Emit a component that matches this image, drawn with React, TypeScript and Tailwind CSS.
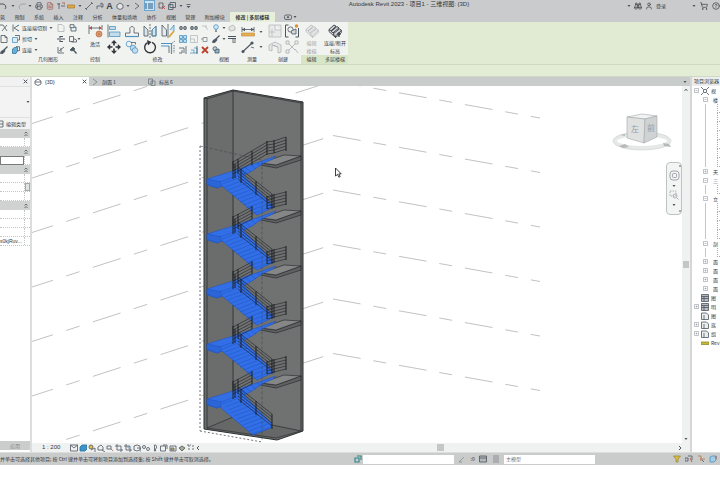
import type { ReactNode } from 'react';
import { Binoculars, ShoppingCart, User, CircleHelp, Printer, FileText } from 'lucide-react';

const INK = '#4b5560';
const BLUE = '#4d94c4';

interface IconProps {
  w?: number;
  h?: number;
  children: ReactNode;
  className?: string;
}

function Icon({ w = 8, h = 8, children, className = '' }: IconProps) {
  return (
    <svg
      width={w}
      height={h}
      viewBox={`0 0 ${w} ${h}`}
      fill="none"
      stroke={INK}
      strokeWidth="0.8"
      className={`shrink-0 ${className}`}
    >
      {children}
    </svg>
  );
}

function Caret() {
  return (
    <Icon w={4} h={4}>
      <path d="M0.5 1h3L2 3z" fill={INK} stroke="none" />
    </Icon>
  );
}

function Tool({ label, children, className = '' }: { label: string; children: ReactNode; className?: string }) {
  return (
    <button type="button" aria-label={label} className={`flex shrink-0 items-center justify-center ${className}`}>
      {children}
    </button>
  );
}

// small 8px glyphs
const join = (
  <Icon>
    <path d="M1 0.5v7M2 4l5-3M2 4l5 3" />
    <path d="M5 1.5h2M5 6.5h2" stroke={BLUE} />
  </Icon>
);
const cut = (
  <Icon>
    <path d="M0.5 2.5h5v5h-5z" fill="#dfe9f0" stroke={BLUE} />
    <path d="M3 0.5h4.5v4.5H5.5" />
  </Icon>
);
const joinSolid = (
  <Icon>
    <path d="M0.5 3l2-1.5h3V5l-1.5 2.5H0.5z" fill="#6aaed6" stroke="#2c77a8" />
    <path d="M4 0.7h3.5v4H5.5" />
  </Icon>
);
const page = (
  <Icon>
    <path d="M1 0.5h4l2 2v5H1zM5 0.5v2h2" />
  </Icon>
);
const pageFaint = (
  <Icon className="opacity-40">
    <path d="M1 0.5h4l2 2v5H1z" />
  </Icon>
);
const cross = (
  <Icon>
    <path d="M0 1h3l4 6M7 1L2 7" />
  </Icon>
);
const brush = (
  <Icon>
    <path d="M7.5 0.5L4 4" strokeWidth="1.2" />
    <path d="M4.4 3.4L1 5.5l-0.5 2h2.5L5 5z" fill={INK} />
  </Icon>
);
const splitFace = (
  <Icon>
    <path d="M0 4h8M3 1v2M3 5v2M3 1.5h3M3 6.5h3" strokeWidth="1.1" />
  </Icon>
);
const paint = (
  <Icon>
    <path d="M1 1v6h6M2 5l5-4M4 2v4" />
  </Icon>
);
const solids = (
  <Icon>
    <path d="M1 0.7h4v3H1zM2 3.5v3.5h5V3H5" />
    <path d="M5 3l1.5 1.5" stroke={BLUE} />
  </Icon>
);
const shapes = (
  <Icon>
    <path d="M0.5 1.5h4v5h-4zM4.5 3.5L7.5 5v2h-5" />
  </Icon>
);
const hammer = (
  <Icon>
    <path d="M1 4L4 1l2 2-3 2z" fill={INK} />
    <path d="M4 3.5l3.5 4" strokeWidth="1.3" />
  </Icon>
);

// large ribbon glyphs
const activate = (
  <Icon w={15} h={14}>
    <path d="M1 1v9M14 1v5M1 4h12" />
    <path d="M1 4l3-2v4zM14 4l-3-2v4z" fill="#b4534a" stroke="none" />
    <circle cx="11" cy="10" r="3" fill="#e5b48c" stroke="#c06f46" />
    <path d="M11 7v6M8 10h6M9 8l4 4M13 8l-4 4" stroke="#c06f46" strokeWidth="0.6" />
  </Icon>
);
const align = (
  <Icon w={14} h={14}>
    <path d="M1 0.5v13" stroke={INK} />
    <path d="M2.5 2.5h6v3h-6zM2.5 8h10.5v4.5H2.5z" fill="#c5dceb" stroke={BLUE} />
  </Icon>
);
const offset = (
  <Icon w={14} h={14}>
    <path d="M0.5 9h4.5V6a2.3 2.3 0 1 1 4 0v3h4.5" />
    <path d="M0.5 12.5h13" stroke={BLUE} strokeWidth="1.2" />
    <path d="M0.5 9v3.5M13.5 9v3.5" />
  </Icon>
);
const mirror = (
  <Icon w={14} h={14}>
    <path d="M1 12V2l4 4v6zM13 12V2L9 6v6z" fill="#d8e4ec" />
    <path d="M9 6v6h4V2z" stroke={BLUE} />
    <path d="M7 0v14" strokeDasharray="2 1" />
  </Icon>
);
const mirrorDraw = (
  <Icon w={14} h={14}>
    <path d="M1 12V1l4.5 5v6z" fill="#e3e9ec" />
    <path d="M9 6l4-5v6" stroke={BLUE} fill="#c5dceb" />
    <path d="M7 0v14" />
    <path d="M8 13l5-6" stroke="#d9a441" strokeWidth="1.8" />
  </Icon>
);
const move = (
  <Icon w={14} h={14}>
    <path d="M7 2v10M2 7h10" strokeWidth="1.6" stroke="#30363b" strokeDasharray="3.5 3" />
    <path d="M7 0l3 3.2H4zM7 14l3-3.2H4zM0 7l3.2-3v6zM14 7l-3.2-3v6z" fill="#30363b" stroke="none" />
  </Icon>
);
const copy = (
  <Icon w={14} h={14}>
    <circle cx="4" cy="4" r="2.8" stroke={BLUE} />
    <path d="M6 2.5h4.5v2" />
    <circle cx="8" cy="8" r="2.8" fill="#c5dceb" stroke={BLUE} />
    <circle cx="10" cy="10.5" r="2.8" fill="#c5dceb" stroke={BLUE} />
  </Icon>
);
const rotate = (
  <Icon w={14} h={14}>
    <path d="M4.5 2.6A5.4 5.4 0 1 0 9 2.3" stroke="#30363b" strokeWidth="1.4" />
    <path d="M4 0l4.5 2L5 5.5z" fill="#30363b" stroke="none" />
  </Icon>
);
const trim = (
  <Icon w={14} h={14}>
    <path d="M0 3.5h10.5V14M0 6h8" stroke={BLUE} strokeWidth="1.2" />
    <path d="M10.5 3.5L14 1M13 5v8" strokeDasharray="1.5 1" />
    <path d="M8 6v7" />
  </Icon>
);
const ruler = (
  <Icon w={14} h={10}>
    <path d="M1 0v5M13 0v5M1 2.5h12" />
    <path d="M1 2.5l3-1.8v3.6zM13 2.5l-3-1.8v3.6z" fill={INK} stroke="none" />
    <path d="M0.5 6h13v3H0.5z" fill="#e8b054" stroke="#b98635" strokeWidth="0.6" />
  </Icon>
);
const measureLine = (
  <Icon w={14} h={14}>
    <path d="M2 11.5L11 3" strokeWidth="1.1" />
    <circle cx="2" cy="11.5" r="1.5" fill={INK} stroke="none" />
    <circle cx="11" cy="3" r="1.6" fill={INK} stroke="none" />
    <path d="M10 7l3 1" />
  </Icon>
);
const parts = (
  <Icon w={14} h={14} className="opacity-35">
    <path d="M1 1h12v12H1zM7 1v5h6M4 5v8M1 8h6" fill="#d9dcdd" />
  </Icon>
);
const group = (
  <Icon w={14} h={14}>
    <path d="M3.5 1h-3v12h3M10.5 13h3V4" strokeWidth="1" />
    <circle cx="5.5" cy="5.5" r="2.6" />
    <path d="M6 7l5-2v5H7z" fill="#d5dade" />
    <circle cx="11.5" cy="2" r="1.8" fill="#d9923f" stroke="none" />
  </Icon>
);
const assembly = (
  <Icon w={14} h={14} className="opacity-40">
    <path d="M1 5l6-3 6 3v7l-3 1V7L4 5v6l-3-1zM4 5l6 2" fill="#d9dcdd" />
  </Icon>
);
const similar = (
  <Icon w={14} h={14} className="opacity-45">
    <path d="M1 1h3v3H1zM10 1h3v3h-3zM1 10h3v3H1zM10 9l3 4M4 4l6 6M10 4L4 10" />
  </Icon>
);
const stairsArt = (
  <>
    <path d="M1 5.5L6 1l2 1.2L3 7zM3 7.5L9 2.5l2 1.4-6 5zM5 10l6.5-5.2 2 1.6L7.5 12z" fill="#cfd3d5" />
    <path d="M1 5.5v2l6.5 6v-1.6M7.5 13.5l5.8-4.8V6.4" />
  </>
);
const editStairs = (
  <Icon w={14} h={14} className="opacity-35">
    {stairsArt}
  </Icon>
);
const levelStairs = (
  <Icon w={14} h={14}>
    <g stroke="#2f363c" strokeWidth="0.9">
      {stairsArt}
    </g>
    <path d="M9 10h4M11 8v5" stroke="#2f363c" strokeWidth="1.2" />
  </Icon>
);

const modifySmall: { label: string; icon: ReactNode }[] = [
  { label: '拆分图元', icon: <Icon><path d="M0 4h8M1 2.5h2v3H1zM5 2.5h2v3H5z" /></Icon> },
  { label: '用间隙拆分', icon: <Icon><path d="M0 4h8M1 2.5h2v3H1zM5 2.5h2v3H5z" fill="#dfe3e5" /></Icon> },
  { label: '解锁', icon: <Icon className="opacity-35"><path d="M1 2h3l3 4M5 1v3" /></Icon> },
  { label: '阵列', icon: <Icon><path d="M0.5 0.5h3v3h-3zM4.5 0.5h3v3h-3zM0.5 4.5h3v3h-3zM4.5 4.5h3v3h-3z" fill="#c5dceb" stroke={BLUE} /></Icon> },
  { label: '缩放', icon: <Icon className="opacity-35"><path d="M0.5 0.5h7v7h-7zM0.5 4h4v3.5" /></Icon> },
  { label: '锁定', icon: <Icon className="opacity-70"><path d="M2 2.5h4v4H2zM0 4h2" /></Icon> },
  { label: '修剪单个', icon: <Icon><path d="M0 2h5v5M3 4v3H0M7 0v8" /></Icon> },
  { label: '修剪多个', icon: <Icon><path d="M0 7h7M1 4h3v3M4 2h3v5" stroke={BLUE} /><path d="M7 0v8" /></Icon> },
  { label: '删除', icon: <Icon><path d="M1 1l6 6M7 1L1 7" stroke="#bd3f2c" strokeWidth="1.8" /></Icon> },
];

function Panel({ title, className, titleClass = '', children }: { title: string; className: string; titleClass?: string; children: ReactNode }) {
  return (
    <section className={`flex shrink-0 flex-col bg-[#f1f3f1] ${className}`}>
      <div className="flex min-h-0 flex-1 justify-center">{children}</div>
      <h2 className={`h-[9px] text-center whitespace-nowrap ${titleClass}`}>{title}</h2>
    </section>
  );
}

function Column({ children, className = '' }: { children: ReactNode; className?: string }) {
  return <div className={`flex flex-col items-start gap-[3px] pt-[2px] ${className}`}>{children}</div>;
}

const menuTabs = ['筑', '预制', '系统', '插入', '注释', '分析', '体量和场地', '协作', '视图', '管理', '附加模块'];

function QuickAccess() {
  return (
    <div className="flex h-[11px] items-center">
      <div className="flex w-[191px] shrink-0 items-center justify-between text-[#3f454a]">
        <Tool label="放弃"><Icon><path d="M0 2h3a3 3 0 0 1 2 5" strokeWidth="1" /></Icon></Tool>
        <Caret />
        <Tool label="重做"><Icon className="opacity-40"><path d="M8 2H4a3 3 0 0 0-2 5" /></Icon></Tool>
        <Caret />
        <Tool label="打印"><Printer size={8} /></Tool>
        <Tool label="导出"><FileText size={8} color="#a2584e" /></Tool>
        <Tool label="链接"><Icon><path d="M0 2h3M2 1v6M4 4h4" /><path d="M5 1h3v2" stroke="#b4534a" /></Icon></Tool>
        <Tool label="测量"><Icon><path d="M0.5 3h7v3h-7z" fill="#dca94b" stroke="#ab7f32" /></Icon></Tool>
        <Caret />
        <Tool label="对齐标注"><Icon><path d="M1 7l6-6M0 6l2 2M6 0l2 2" /></Icon></Tool>
        <Tool label="标记"><Icon><path d="M1 7V4h3M5 1l2 1v3H5z" /></Icon></Tool>
        <Tool label="文字" className="font-['Liberation_Sans'] text-[9px] leading-[10px] font-bold">A</Tool>
        <Tool label="默认三维视图"><Icon><path d="M1 3l3-2 3 2v3L4 7.5 1 6z" fill="#e5e5e5" /></Icon></Tool>
        <Caret />
        <Tool label="剖面"><Icon><path d="M2 1l4 3-4 3" /></Icon></Tool>
        <Tool label="细线" className="h-[11px] w-[11px] border border-[#6ba4cc] bg-[#cbe2f2]">
          <Icon><path d="M0 2h2M0 4h2M0 6h2M3 2h5M3 4h5M3 6h5" stroke="#245a85" strokeWidth="1.2" /></Icon>
        </Tool>
        <Tool label="关闭非活动视图"><Icon><path d="M1 1h4v5H1z" /><path d="M4 4l3 3M7 4L4 7" stroke="#b8433b" /></Icon></Tool>
        <Tool label="切换窗口"><Icon><path d="M2 0.5h5.5v5H2zM0.5 2.5H5v5H0.5z" /></Icon></Tool>
        <Caret />
        <Tool label="自定义"><Icon w={5} h={6}><path d="M0.5 1.5h4" /><path d="M0.5 3h4L2.5 5z" fill={INK} stroke="none" /></Icon></Tool>
      </div>
      <h1 className="flex-1 self-start text-center font-['Liberation_Sans','Noto_Sans_CJK_SC',sans-serif] text-[6px] leading-[8px] whitespace-nowrap">
        Autodesk Revit 2023 - 项目1 - 三维视图: {'{3D}'}
      </h1>
      <div className="flex w-[93px] shrink-0 items-center justify-between">
        <div className="flex items-center gap-[3px]">
          <Caret />
          <Tool label="搜索"><Binoculars size={8} /></Tool>
          <Tool label="用户"><User size={8} /></Tool>
          <button type="button">登录</button>
        </div>
        <div className="flex items-center gap-[4px]">
          <Caret />
          <Tool label="应用商店"><ShoppingCart size={8} /></Tool>
          <Tool label="帮助"><CircleHelp size={8} /></Tool>
        </div>
      </div>
    </div>
  );
}

function Ribbon() {
  return (
    <div className="flex h-[42px] bg-[#e1ebd3]">
      <Panel title="几何图形" className="w-[84px]" titleClass="pl-[12px]">
        <div className="flex flex-1 justify-between pr-[3px]">
          <Column>
            <Tool label="连接端">{cross}</Tool>
            <Tool label="粘贴">{page}</Tool>
            <Tool label="匹配类型">{brush}</Tool>
          </Column>
          <Column>
            <button type="button" className="flex h-[8px] items-center gap-[2px]">{join}连接端切割<Caret /></button>
            <button type="button" className="flex h-[8px] items-center gap-[2px]">{cut}剪切<Caret /></button>
            <button type="button" className="flex h-[8px] items-center gap-[2px]">{joinSolid}连接<Caret /></button>
          </Column>
          <Column>
            <Tool label="墙洞口">{pageFaint}</Tool>
            <Tool label="拆分面">{splitFace}</Tool>
            <Tool label="填色">{paint}</Tool>
          </Column>
          <Column>
            <Tool label="墙连接">{solids}</Tool>
            <div className="flex h-[8px] items-center"><Tool label="梁连接">{shapes}</Tool><Caret /></div>
            <Tool label="拆除">{hammer}</Tool>
          </Column>
        </div>
      </Panel>
      <Panel title="控制" className="w-[22px]">
        <button type="button" className="flex flex-col items-center gap-[2px] pt-[2px]">{activate}激活</button>
      </Panel>
      <Panel title="修改" className="w-[103px]">
        <div className="grid grid-cols-4 content-start gap-x-[4px] gap-y-[2px] pt-[2px]">
          <Tool label="对齐">{align}</Tool>
          <Tool label="偏移">{offset}</Tool>
          <Tool label="镜像拾取轴">{mirror}</Tool>
          <Tool label="镜像绘制轴">{mirrorDraw}</Tool>
          <Tool label="移动">{move}</Tool>
          <Tool label="复制">{copy}</Tool>
          <Tool label="旋转">{rotate}</Tool>
          <Tool label="修剪">{trim}</Tool>
        </div>
        <div className="grid grid-cols-3 content-start gap-[3px] pt-[2px] pl-[4px]">
          {modifySmall.map((item) => (
            <Tool key={item.label} label={item.label}>{item.icon}</Tool>
          ))}
        </div>
      </Panel>
      <Panel title="视图" className="w-[30px]">
        <Column>
          <div className="flex items-center gap-[2px]">
            <Tool label="隐藏"><Icon><circle cx="4" cy="3" r="2.3" fill="#d5e9f5" stroke={BLUE} /><path d="M3 6h2M3 7.3h2" /></Icon></Tool>
            <Caret />
            <Tool label="置换"><Icon className="opacity-40"><path d="M1 3l4-2 2 2v3L3 7 1 6z" fill="#ccc" /></Icon></Tool>
          </div>
          <div className="flex items-center gap-[2px]">
            <Tool label="替换">{brush}</Tool>
            <Caret />
            <Tool label="线处理"><Icon><path d="M0 1.5h8M0 3.5h8" strokeWidth="1.2" /><path d="M5 4v4h2V4" /></Icon></Tool>
          </div>
          <Tool label="选择框"><Icon><circle cx="3" cy="2.7" r="2" fill="#b8cddb" /><path d="M3 4l4-1v4H3z" fill="#8fb6d0" /></Icon></Tool>
        </Column>
      </Panel>
      <Panel title="测量" className="w-[26px]">
        <div className="flex flex-col gap-[3px] pt-[5px]">
          <div className="flex items-center gap-[4px]"><Tool label="标注">{ruler}</Tool><Caret /></div>
          <div className="flex items-center gap-[4px]"><Tool label="测量距离">{measureLine}</Tool><Caret /></div>
        </div>
      </Panel>
      <Panel title="创建" className="w-[36px]">
        <div className="grid grid-cols-2 content-start gap-x-[3px] gap-y-[2px] pt-[2px]">
          <Tool label="创建零件">{parts}</Tool>
          <Tool label="创建组">{group}</Tool>
          <Tool label="创建部件">{assembly}</Tool>
          <Tool label="创建类似">{similar}</Tool>
        </div>
      </Panel>
      <Panel title="编辑" className="w-[21px]" titleClass="bg-[#d8e5c6]">
        <button type="button" disabled className="flex flex-col items-center gap-[1px] pt-[2px] text-[#a3a7a5]">
          {editStairs}
          <span>编辑<br />楼梯</span>
        </button>
      </Panel>
      <Panel title="多层楼梯" className="w-[26px]" titleClass="bg-[#d8e5c6]">
        <button type="button" className="flex flex-col items-center gap-[1px] pt-[2px] whitespace-nowrap">
          {levelStairs}
          <span>连接/断开<br />标高</span>
        </button>
      </Panel>
    </div>
  );
}

const propertyRows = ['head', 'row', 'head', 'input', 'head', 'row', 'button', 'row', 'head', 'row', 'row', 'row', 'value'];

function Properties() {
  return (
    <aside className="flex w-[32px] shrink-0 flex-col border-r-2 border-[#dcdedd] bg-white">
      <div className="flex h-[9px] items-center justify-end bg-[#f0f1f0] pr-[2px]">
        <Tool label="关闭属性"><Icon w={5} h={5}><path d="M0.7 0.7l3.6 3.6M4.3 0.7L0.7 4.3" strokeWidth="1" /></Icon></Tool>
      </div>
      <div className="flex h-[32px] items-center justify-end border-y border-[#dfe1e0] bg-[#f2f3f2]"><Caret /></div>
      <button type="button" className="flex h-[11px] items-center gap-[2px] bg-[#f2f3f2] whitespace-nowrap">
        <Icon w={4} h={8}><path d="M0 1h3v6H0M0 4h3" /></Icon>编辑类型
      </button>
      {propertyRows.map((kind, i) => {
        if (kind === 'head') {
          return (
            <div key={i} className="flex h-[9px] items-center justify-end bg-[#d0d2d1] pr-[2px]">
              <Icon w={4} h={6}><path d="M0.5 2.5L2 1l1.5 1.5M0.5 5L2 3.5 3.5 5" /></Icon>
            </div>
          );
        }
        return (
          <div key={i} className="flex h-[9px] border-b border-dotted border-[#c4c6c5]">
            <div className="min-w-0 flex-1 border-r border-dotted border-[#c4c6c5]">
              {kind === 'input' && <input aria-label="底部标高" className="block h-[9px] w-full border border-[#777b7c] bg-white" />}
              {kind === 'value' && <span className="block font-['Liberation_Sans'] text-[5px] leading-[8px]">s0kjRuv...</span>}
            </div>
            <div className="w-[5px] shrink-0">
              {kind === 'button' && <button type="button" aria-label="关联参数" className="block h-[8px] w-full border border-[#a5a8a7] bg-[#e2e4e3]" />}
            </div>
          </div>
        );
      })}
      <button type="button" className="mt-auto mb-[2px] h-[9px] bg-[#cbcccc] text-center text-[#858887]">应用</button>
    </aside>
  );
}

const LEVEL = 55;
const levels = [0, 1, 2, 3, 4];
const gridLines = [-2, -1, 0, 1, 2, 3, 4, 5];
const railGaps = [0, 3, 6, 9, 12];

function StairUnit({ index }: { index: number }) {
  const last = index === 4;
  const first = index === 0;
  const treads = Array.from({ length: 11 }, (_, i) => i);
  return (
    <g transform={`translate(0 ${index * LEVEL})`}>
      {/* floor slab */}
      <path d="M261 163l15 2 25-9v4l-25 8-15-3z" fill="#5f6161" stroke="#202426" strokeWidth="0.6" />
      <path d="M261 163l23-8 17 1-25 9z" fill="#858787" stroke="#202426" strokeWidth="0.6" />
      {/* upper flight and half landing */}
      <path d="M207 179l26-8 29-10 14-5-3 3-11 5-10 7-13 7-10 5-12 5-10-3z" fill="#326fe6" stroke="#1d50c0" strokeWidth="0.5" />
      <path d="M207 179v5l10 4 5-2v-4z" fill="#2c65d6" stroke="#1d50c0" strokeWidth="0.5" />
      <path d="M239 169l6 5M245 167l6 5M251 165l5 4M257 163l4 3" stroke="#1d50c0" strokeWidth="0.5" fill="none" />
      {/* lower flight */}
      <path d={last ? 'M221 182l22-8 28 29v5l-18 7-32-27z' : 'M220 182l22-8 32 33-17 8-35-29z'} fill="#326fe6" stroke="#1d50c0" strokeWidth="0.5" />
      {treads.map((t) => (
        <path key={t} d={`M${222 + t * 3} ${184 + t * 3}l19 -7`} stroke="#1d52c4" strokeWidth="0.5" />
      ))}
      <g stroke="#1c2024" strokeWidth="0.6" fill="none">
        {railGaps.map((d) => (
          <path key={d} d={first ? `M233 ${162 + d}L267 ${142 + d}L274 ${141 + d}L286 ${137 + d}` : `M233 ${162 + d}L252 ${152 + d}`} />
        ))}
        <path d={first ? 'M233 161v18M238 159v15M252 151v14M267 141v14M274 140v13M286 137v14' : 'M233 161v18M238 159v15M252 151v13'} strokeWidth="1" />
        {railGaps.map((d) => (
          <path key={d} d={`M238 ${167 + d}L272 ${194 + d}`} />
        ))}
        <path d="M241 169v14M256 181v14M272 194v15M235 164v14" strokeWidth="1" />
        {!last && railGaps.map((d) => <path key={d} d={`M267 ${197 + d}L274 ${195 + d}L286 ${192 + d}`} />)}
        {!last && <path d="M267 196v13M274 194v14M286 191v14" strokeWidth="1" />}
      </g>
    </g>
  );
}

function Scene() {
  return (
    <svg
      viewBox="32 86 650 357"
      preserveAspectRatio="xMinYMin slice"
      className="absolute inset-0 h-full w-full"
      role="img"
      aria-label="三维视图"
    >
      <g fill="none" stroke="#b0b3b4" strokeWidth="0.8">
        {gridLines.map((k) => (
          <g key={k}>
            <path d={`M32 ${178 + k * 54.5}L333 ${81 + k * 54.5}`} strokeDasharray="29 14 14 14" strokeDashoffset="7" />
            <path d={`M333 ${81 + k * 54.5}L540 ${118 + k * 54.5}`} strokeDasharray="28 13 13 13" />
          </g>
        ))}
      </g>
      {/* shaft */}
      <path d="M204 98l29-8 70 12v329l-26 9-73-11z" fill="#6b6c6c" stroke="#2b2f31" strokeWidth="1" />
      <path d="M234 91l67 12v327l-67-13z" fill="#707171" />
      <path d="M207 428l26-11 68 14-25 7z" fill="#666767" stroke="#2b2f31" strokeWidth="0.7" />
      <path d="M233 90v327M207 98v330M301 103v328" stroke="#2b2f31" strokeWidth="0.8" fill="none" />
      <path d="M204 98l3 1 26-8 68 12 2-1" stroke="#2b2f31" strokeWidth="0.7" fill="none" />
      {levels.map((i) => <StairUnit key={i} index={i} />)}
      <path d="M200 146v285M200 431l62 11" stroke="#4b5053" strokeWidth="0.8" strokeDasharray="2 2" fill="none" />
      <path d="M200 146l62 14v281" stroke="#42484c" strokeWidth="0.6" strokeDasharray="3 2" fill="none" />
      {/* view cube */}
      <ellipse cx="642" cy="141" rx="27" ry="7" fill="none" stroke="#e6e8e8" strokeWidth="4" />
      <ellipse cx="642" cy="141" rx="29" ry="9" fill="none" stroke="#cfd1d2" strokeWidth="0.6" />
      <path d="M619 146l6-2 4 3-6 1zM663 143l6 1 2 3-7-1zM620 135l5-1v2z" fill="#b6b9ba" />
      <path d="M627 117l15-3 15 2-12 3z" fill="#f2f3f3" stroke="#a3a6a7" strokeWidth="0.6" />
      <path d="M627 117l18 2-1 24-17-5z" fill="#dfe1e1" stroke="#a3a6a7" strokeWidth="0.6" />
      <path d="M645 119l12-3v21l-13 6z" fill="#d0d3d4" stroke="#a3a6a7" strokeWidth="0.6" />
      <g fill="#989b9d" className="font-['Noto_Sans_CJK_SC',sans-serif] text-[8px]">
        <text x="631" y="132">左</text>
        <text x="647" y="131">前</text>
      </g>
      {/* pointer */}
      <path d="M335.5 168v8l2-1.6 1.4 2.8 1.3-.6-1.4-2.7h2.4z" fill="#fff" stroke="#111" strokeWidth="0.8" />
    </svg>
  );
}

function NavigationBar() {
  return (
    <div className="absolute top-[76px] right-0 flex h-[53px] w-[16px] flex-col items-center justify-between rounded-sm border border-[#bfc2c3] bg-[#f3f4f4] py-[2px]">
      <span className="h-[2px] w-[2px] self-end bg-[#a6a9aa]" />
      <Tool label="控制盘"><Icon w={11} h={11} className="opacity-60"><rect x="1" y="1" width="9" height="9" rx="3" /><rect x="3.5" y="3.5" width="4" height="4" rx="1" /></Icon></Tool>
      <Caret />
      <Tool label="缩放区域"><Icon w={10} h={10} className="opacity-50"><path d="M1 1h6v5H1z" strokeDasharray="1.5 1" /><circle cx="6" cy="6" r="2" /><path d="M7.5 7.5L9.5 9.5" /></Icon></Tool>
      <Caret />
      <span className="h-[2px] w-[2px] self-end bg-[#a6a9aa]" />
    </div>
  );
}

function ViewControls() {
  const glyphs: { label: string; icon: ReactNode }[] = [
    { label: '详细程度', icon: <path d="M0.5 1h7v6h-7zM0.5 1l3.5 3 3.5-3" /> },
    { label: '视觉样式', icon: <path d="M1 3l2-2h5v4L6 7H1z" fill="#3f93c9" stroke="#24709f" /> },
    { label: '日光路径', icon: <><circle cx="3" cy="3" r="2" fill="#e8bd54" /><path d="M3 6l4-2v4" /></> },
    { label: '阴影', icon: <path d="M1 3l3-2 2 2v3H1zM5 6l3 2" /> },
    { label: '渲染', icon: <><path d="M1 2h4v3H1z" /><path d="M5 5l2 2" stroke="#b4534a" /></> },
    { label: '裁剪视图', icon: <path d="M2 0v6h6M0 2h6v6" /> },
    { label: '显示裁剪', icon: <><path d="M2 0v6h6M0 2h6v6" /><path d="M3 3h2v2" stroke={BLUE} /></> },
    { label: '锁定视图', icon: <path d="M1 2l3-1 3 1v4L4 7 1 6zM4 4h4v4" /> },
    { label: '临时隐藏', icon: <><circle cx="2" cy="3" r="1.5" /><circle cx="6" cy="5" r="1.5" /></> },
    { label: '显示隐藏', icon: <path d="M3.5 1a1.5 2 0 0 1 1 4v2h-1z" /> },
    { label: '临时属性', icon: <path d="M0.5 2h5v5h-5zM3 1h4v4" /> },
    { label: '分析模型', icon: <><path d="M1 2h6v5H1z" /><path d="M2 4h3v2H2z" fill="#e8d254" /></> },
    { label: '位移集', icon: <path d="M1 4l3-2 3 2-3 3z" fill="#9fb18b" /> },
    { label: '约束', icon: <path d="M0 1h4M2 1v6M6 1v6" strokeDasharray="2 1" /> },
  ];
  return (
    <div className="flex h-[9px] shrink-0 items-center bg-[#f0f1f1]">
      <button type="button" className="w-[38px] pl-[10px] text-left font-['Liberation_Sans'] text-[6px] leading-[9px] whitespace-nowrap">1 : 200</button>
      <div className="flex gap-px">
        {glyphs.map((g) => (
          <Tool key={g.label} label={g.label}><Icon>{g.icon}</Icon></Tool>
        ))}
        <Tool label="向左滚动"><Icon w={4} h={8}><path d="M3 2L1 4l2 2" strokeWidth="1" /></Icon></Tool>
      </div>
      <div className="flex flex-1 items-center justify-center pl-[10px]">
        <span className="h-[7px] w-[7px] bg-[#c4c6c7]" />
      </div>
      <Tool label="向右滚动" className="w-[20px]"><Icon w={4} h={8}><path d="M1 2l2 2-2 2" strokeWidth="1" /></Icon></Tool>
    </div>
  );
}

function Workspace() {
  return (
    <main className="flex min-w-0 flex-1 flex-col">
      <div className="flex h-[9px] shrink-0 items-center bg-[#c8cccb]">
        <button type="button" className="flex h-[9px] w-[57px] items-center gap-[3px] bg-white px-[2px]">
          <Icon><path d="M1 3l3-2 3 2v3L4 7.5 1 6zM1 4h6" /></Icon>
          <span className="flex-1 text-left font-['Liberation_Sans']">{'{3D}'}</span>
          <Icon w={5} h={5}><path d="M0.7 0.7l3.6 3.6M4.3 0.7L0.7 4.3" strokeWidth="1" /></Icon>
        </button>
        <button type="button" className="flex w-[57px] items-center gap-[3px] pl-[2px]">
          <Icon><path d="M2 1l4 3-4 3" className="opacity-60" /></Icon>剖面 1
        </button>
        <button type="button" className="flex items-center gap-[3px] pl-[2px]">
          <Icon className="opacity-70"><path d="M0.5 1h4v5h-4zM3 3h4v4.5H3z" /></Icon>标高 6
        </button>
        <div className="ml-auto pr-[3px]"><Caret /></div>
      </div>
      <div className="flex min-h-0 flex-1">
        <div className="relative min-w-0 flex-1 overflow-hidden bg-white">
          <Scene />
          <NavigationBar />
        </div>
        <div className="flex w-[8px] shrink-0 flex-col items-center justify-between bg-[#f0f1f1] py-[2px]">
          <Icon w={4} h={4}><path d="M0.5 3L2 1l1.5 2" /></Icon>
          <span className="h-[7px] w-[6px] bg-[#c4c6c7]" />
          <Caret />
        </div>
      </div>
      <ViewControls />
    </main>
  );
}

interface Node {
  name: string;
  mark: string;
  depth: 0 | 1;
  stubs?: number;
  icon?: 'grid' | 'sheet' | 'link' | 'view';
}

const nodes: Node[] = [
  { name: '视', mark: '-', depth: 0, icon: 'view' },
  { name: '楼', mark: '-', depth: 1, stubs: 7 },
  { name: '天', mark: '+', depth: 1 },
  { name: '三', mark: '-', depth: 1, stubs: 1 },
  { name: '立', mark: '-', depth: 1, stubs: 4 },
  { name: '剖', mark: '-', depth: 1, stubs: 1 },
  { name: '面', mark: '+', depth: 1 },
  { name: '面', mark: '+', depth: 1 },
  { name: '面', mark: '+', depth: 1 },
  { name: '面', mark: '+', depth: 1 },
  { name: '图', mark: '', depth: 0, icon: 'grid' },
  { name: '明', mark: '+', depth: 0, icon: 'grid' },
  { name: '图', mark: '', depth: 0, icon: 'sheet' },
  { name: '族', mark: '+', depth: 0, icon: 'sheet' },
  { name: '组', mark: '+', depth: 0, icon: 'sheet' },
  { name: 'Rev', mark: '', depth: 0, icon: 'link' },
];

const nodeIcons = {
  view: <path d="M0 0l2 2M8 0L6 2M0 8l2-2M8 8L6 6M2.5 2.5h3v3h-3z" />,
  grid: <path d="M0.5 0.5h7v7h-7zM0.5 2.5h7M0.5 4.5h7M3 2.5v5" fill="#b9bcbe" />,
  sheet: <path d="M0.5 1h5l2 2v4.500h-7zM3 3v4.500" fill="#eceeee" />,
  link: <path d="M0 3h8v2.500H0z" fill="#c3b838" stroke="#948c2c" />,
};

function Expander({ mark }: { mark: string }) {
  return (
    <Icon w={5} h={5} className="opacity-70">
      {mark && <path d="M0.5 0.5h4v4h-4zM1.5 2.5h2" strokeWidth="0.5" />}
      {mark === '+' && <path d="M2.5 1.5v2" strokeWidth="0.5" />}
    </Icon>
  );
}

function Browser() {
  return (
    <aside className="w-[30px] shrink-0 overflow-hidden border-l-2 border-[#d5d7d7] bg-white">
      <h2 className="h-[9px] bg-[#eceeed] pl-[2px] whitespace-nowrap">项目浏览器</h2>
      <ul className="whitespace-nowrap">
        {nodes.map((n, i) => (
          <li key={i}>
            <div className={`flex h-[9px] items-center gap-[2px] ${n.depth ? 'pl-[11px]' : 'pl-[2px]'}`}>
              <Expander mark={n.mark} />
              {n.icon ? <Icon>{nodeIcons[n.icon]}</Icon> : <span className="w-px" />}
              {n.name}
            </div>
            {n.stubs && (
              <div className="ml-[13px] border-l border-[#c3c6c7]">
                {Array.from({ length: n.stubs }, (_, s) => (
                  <div key={s} className="flex h-[9px] pl-[11px]">
                    <span className="h-[9px] w-[3px] border-b border-l border-dotted border-[#a9adaf]" />
                  </div>
                ))}
              </div>
            )}
          </li>
        ))}
      </ul>
    </aside>
  );
}

function StatusBar() {
  return (
    <footer className="flex h-[13px] shrink-0 items-center border-t border-[#dcdddd] bg-[#cacbcb] whitespace-nowrap">
      <p className="min-w-0 flex-1 overflow-hidden">
        并单击可选择其他项目; 按 Ctrl 键并单击可将新项目添加到选择集; 按 Shift 键并单击可取消选择。
      </p>
      <div className="flex w-[368px] shrink-0 items-center">
        <Tool label="工作集" className="w-[11px]"><Icon><path d="M1 3h4v4H1zM3 1h4v4" stroke="#2b8588" strokeWidth="1.1" /></Icon></Tool>
        <select aria-label="活动工作集" className="h-[9px] w-[91px] appearance-none bg-white pl-[2px]">
          <option value=""></option>
        </select>
        <div className="flex w-[50px] items-center justify-between px-[4px]">
          <Icon><path d="M1 7l5-5M1 7h3" className="opacity-50" /></Icon>
          <span>:0</span>
          <Icon><path d="M0.5 1h7v6h-7zM0.5 3h7" fill="#b5b8b9" /></Icon>
          <Icon className="opacity-60"><path d="M1 1h6M1 3h6M1 5h6M1 7h6" /></Icon>
        </div>
        <select aria-label="设计选项" className="h-[9px] w-[91px] appearance-none bg-white pl-[2px] text-[#6f7374]">
          <option>主模型</option>
        </select>
        <div className="ml-auto flex gap-[4px] pr-[3px]">
          <Tool label="过滤"><Icon><path d="M0.5 1h7L5 4v3H3V4z" fill="#d6bd49" stroke="#a08b31" /></Icon></Tool>
          <Tool label="选择链接"><Icon><path d="M0 3h3v3H0zM3 1h4v4" /><path d="M5 3l2 4" stroke="#b4423b" /></Icon></Tool>
          <Tool label="选择底图"><Icon><path d="M1 1h3v5M3 4h5" stroke="#b0713a" /><path d="M5 5l2 2" /></Icon></Tool>
          <Tool label="按面选择"><Icon><path d="M1 2l2-1h4v4L5 7H1z" fill="#a5cbe0" stroke={BLUE} /><path d="M7 1v3" stroke="#b4423b" /></Icon></Tool>
        </div>
      </div>
    </footer>
  );
}

export default function App() {
  return (
    <div className="flex h-screen w-full flex-col overflow-hidden bg-white pb-[15px] font-['Noto_Sans_CJK_SC',sans-serif] text-[5px] leading-[8px] text-[#33383c]">
      <header className="shrink-0 bg-[#cacbcc]">
        <QuickAccess />
        <nav className="flex h-[11px] items-center whitespace-nowrap">
          <div className="flex w-[230px] shrink-0 items-center justify-between pr-[5px]">
            {menuTabs.map((t) => (
              <button key={t} type="button">{t}</button>
            ))}
          </div>
          <button type="button" className="h-[10px] w-[45px] self-end bg-[#e6efd9] font-bold">修改 | 多层楼梯</button>
          <div className="flex items-center gap-px pl-[9px]">
            <Icon><rect x="0.5" y="2" width="7" height="4.5" rx="1.5" /><circle cx="4" cy="4.2" r="0.7" fill={INK} /></Icon>
            <Caret />
          </div>
        </nav>
        <Ribbon />
        <div className="h-[13px] border-y border-[#d0d8c6] bg-[#e3edd5]" />
      </header>
      <div className="flex min-h-0 flex-1">
        <Properties />
        <Workspace />
        <Browser />
      </div>
      <StatusBar />
    </div>
  );
}
